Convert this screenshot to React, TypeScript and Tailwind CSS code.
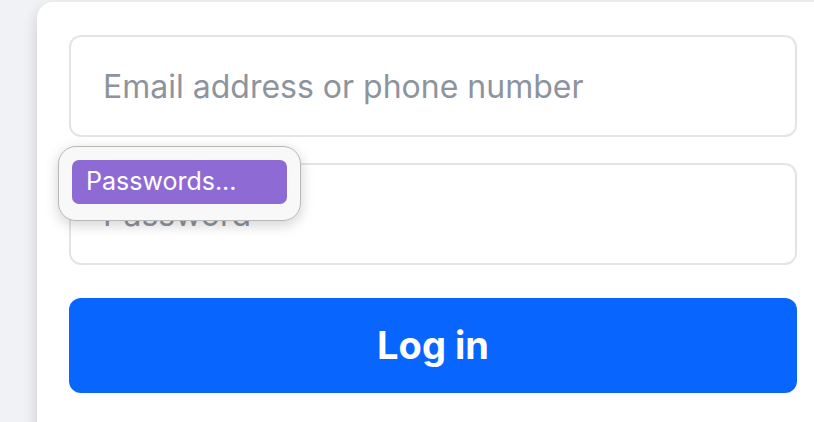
export default function App() {
  return (
    <div
      className="relative w-[814px] h-[422px] overflow-hidden bg-[#f0f2f5]"
      style={{ fontFamily: 'Inter, "Liberation Sans", Arial, sans-serif' }}
    >
      <div className="ml-[37px] mt-[2px] w-[820px] h-[460px] bg-white rounded-[16px] shadow-[0_4px_16px_rgba(0,0,0,0.1),0_8px_16px_rgba(0,0,0,0.06)] pt-[33px] pl-[32px]">
        <div className="w-[728px] flex flex-col">
          <div className="h-[102px] border-2 border-[#e2e4e8] rounded-[12px] flex items-center pl-[32px] pt-[2px] text-[32px] text-[#8d949e]">
            Email address or phone number
          </div>
          <div className="mt-[26px] h-[102px] border-2 border-[#e2e4e8] rounded-[12px] flex items-center pl-[32px] pt-[2px] text-[32px] text-[#8d949e]">
            Password
          </div>
          <button className="mt-[33px] h-[95px] bg-[#0866ff] rounded-[12px] text-white text-[38px] font-bold flex items-center justify-center">
            Log in
          </button>
        </div>
      </div>
      <div className="absolute left-[58px] top-[146px] w-[243px] h-[75px] bg-[#f8f8f8] border border-[#b8b8b8] rounded-[18px] shadow-[0_4px_14px_rgba(0,0,0,0.18)] p-[13px]">
        <div className="h-[44px] bg-[#8e6bd4] rounded-[7px] flex items-center pl-[14px] text-white text-[25px]">
          Passwords...
        </div>
      </div>
    </div>
  );
}
